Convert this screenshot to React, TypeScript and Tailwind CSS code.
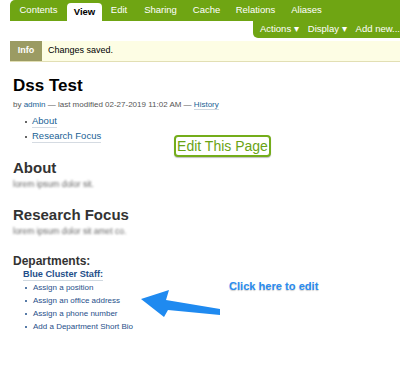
const tabs = [
  { label: "Contents", w: "w-[57px]" },
  { label: "View", w: "w-[35px]", active: true },
  { label: "Edit", w: "w-[34px]" },
  { label: "Sharing", w: "w-[49px]" },
  { label: "Cache", w: "w-[43px]" },
  { label: "Relations", w: "w-[55px]" },
  { label: "Aliases", w: "w-[47px]" },
];

const staffItems = [
  "Assign a position",
  "Assign an office address",
  "Assign a phone number",
  "Add a Department Short Bio",
];

function Arrow() {
  return (
    <svg width="84" height="30" viewBox="0 0 84 30" className="absolute left-[139px] top-[288px]">
      <path d="M2 11 L30 2 L27 12 L81 21 L81 27 L29 22 L25 29 Z" fill="#1f8af0" />
    </svg>
  );
}

export default function App() {
  return (
    <div className="relative h-[365px] w-[400px] overflow-hidden bg-white font-['Liberation_Sans',Arial,sans-serif]">
      {/* tab bar */}
      <div className="ml-[10px] flex h-[21px] items-end rounded-tl-[5px] bg-[#6fa513] text-[9.5px]">
        {tabs.map((t) =>
          t.active ? (
            <div key={t.label} className={`${t.w} flex h-[18px] items-center justify-center rounded-t-[4px] bg-white font-bold text-black`}>
              {t.label}
            </div>
          ) : (
            <div key={t.label} className={`${t.w} flex h-[21px] items-center justify-center text-white`}>
              {t.label}
            </div>
          )
        )}
      </div>
      <div className="flex justify-end">
        <div className="flex h-[17px] w-[147px] items-center gap-[9px] whitespace-nowrap rounded-bl-[5px] bg-[#6fa513] pl-[7px] text-[9.5px] text-white">
          <span>Actions ▾</span>
          <span>Display ▾</span>
          <span>Add new...</span>
        </div>
      </div>

      {/* status message */}
      <div className="ml-[10px] mt-[3px] flex h-[21px] border-b border-[#e2dfb4] bg-[#fdfde4] text-[9px]">
        <div className="flex w-[32px] items-center justify-center bg-[#9b9b63] font-bold text-white">Info</div>
        <div className="flex items-center pl-[6px] text-black">Changes saved.</div>
      </div>

      <div className="px-[13px]">
        <h1 className="mt-[14px] text-[17px] font-bold leading-[20px] text-black">Dss Test</h1>
        <div className="mt-[3px] text-[8px] leading-[12px] text-[#555]">
          by <span className="text-[#205f95]">admin</span> — last modified 02-27-2019 11:02 AM —{" "}
          <span className="border-b border-[#cfd8e0] text-[#205f95]">History</span>
        </div>

        <div className="flex">
          <ul className="mt-[3px] w-[150px] pl-[12px] text-[9.5px]">
            <li className="flex h-[15px] items-center gap-[5px]">
              <span className="h-[2px] w-[2px] rounded-full bg-[#333]" />
              <span className="border-b border-[#d5dbe2] leading-[12px] text-[#205f95]">About</span>
            </li>
            <li className="flex h-[15px] items-center gap-[5px]">
              <span className="h-[2px] w-[2px] rounded-full bg-[#333]" />
              <span className="border-b border-[#d5dbe2] leading-[12px] text-[#205f95]">Research Focus</span>
            </li>
          </ul>
          <div className="ml-[11px] mt-[24px] flex h-[22px] w-[97px] items-center justify-center rounded-[4px] border-2 border-[#74ad1a] bg-white text-[14px] text-[#6aa314] shadow-[0_1px_1px_rgba(0,0,0,0.25)]">
            Edit This Page
          </div>
        </div>

        <h2 className="mt-[2px] text-[15px] font-bold leading-[18px] text-[#333]">About</h2>
        <div className="mt-[2px] text-[8.5px] leading-[10px] text-[#666] blur-[1px]">lorem ipsum dolor sit.</div>

        <h2 className="mt-[17px] text-[15px] font-bold leading-[18px] text-[#333]">Research Focus</h2>
        <div className="mt-[2px] text-[8.5px] leading-[10px] text-[#666] blur-[1px]">lorem ipsum dolor sit amet co.</div>

        <h3 className="mt-[18px] text-[12px] font-bold leading-[14px] text-[#333]">Departments:</h3>
        <div className="ml-[10px]">
          <div className="w-fit border-b border-[#cfd8e0] text-[9.2px] font-bold leading-[12px] text-[#1f4f8a]">
            Blue Cluster Staff:
          </div>
          <ul className="text-[8px] text-[#1f4f8a]">
            {staffItems.map((s) => (
              <li key={s} className="flex h-[13px] items-center gap-[6px] pl-[2px]">
                <span className="h-[2px] w-[2px] rounded-full bg-[#1f4f8a]" />
                {s}
              </li>
            ))}
          </ul>
        </div>
      </div>

      <Arrow />
      <div className="absolute left-[229px] top-[278px] text-[11.1px] font-bold text-[#2a8cf0] [text-shadow:0_1px_1px_rgba(0,0,0,0.2)]">
        Click here to edit
      </div>
    </div>
  );
}
